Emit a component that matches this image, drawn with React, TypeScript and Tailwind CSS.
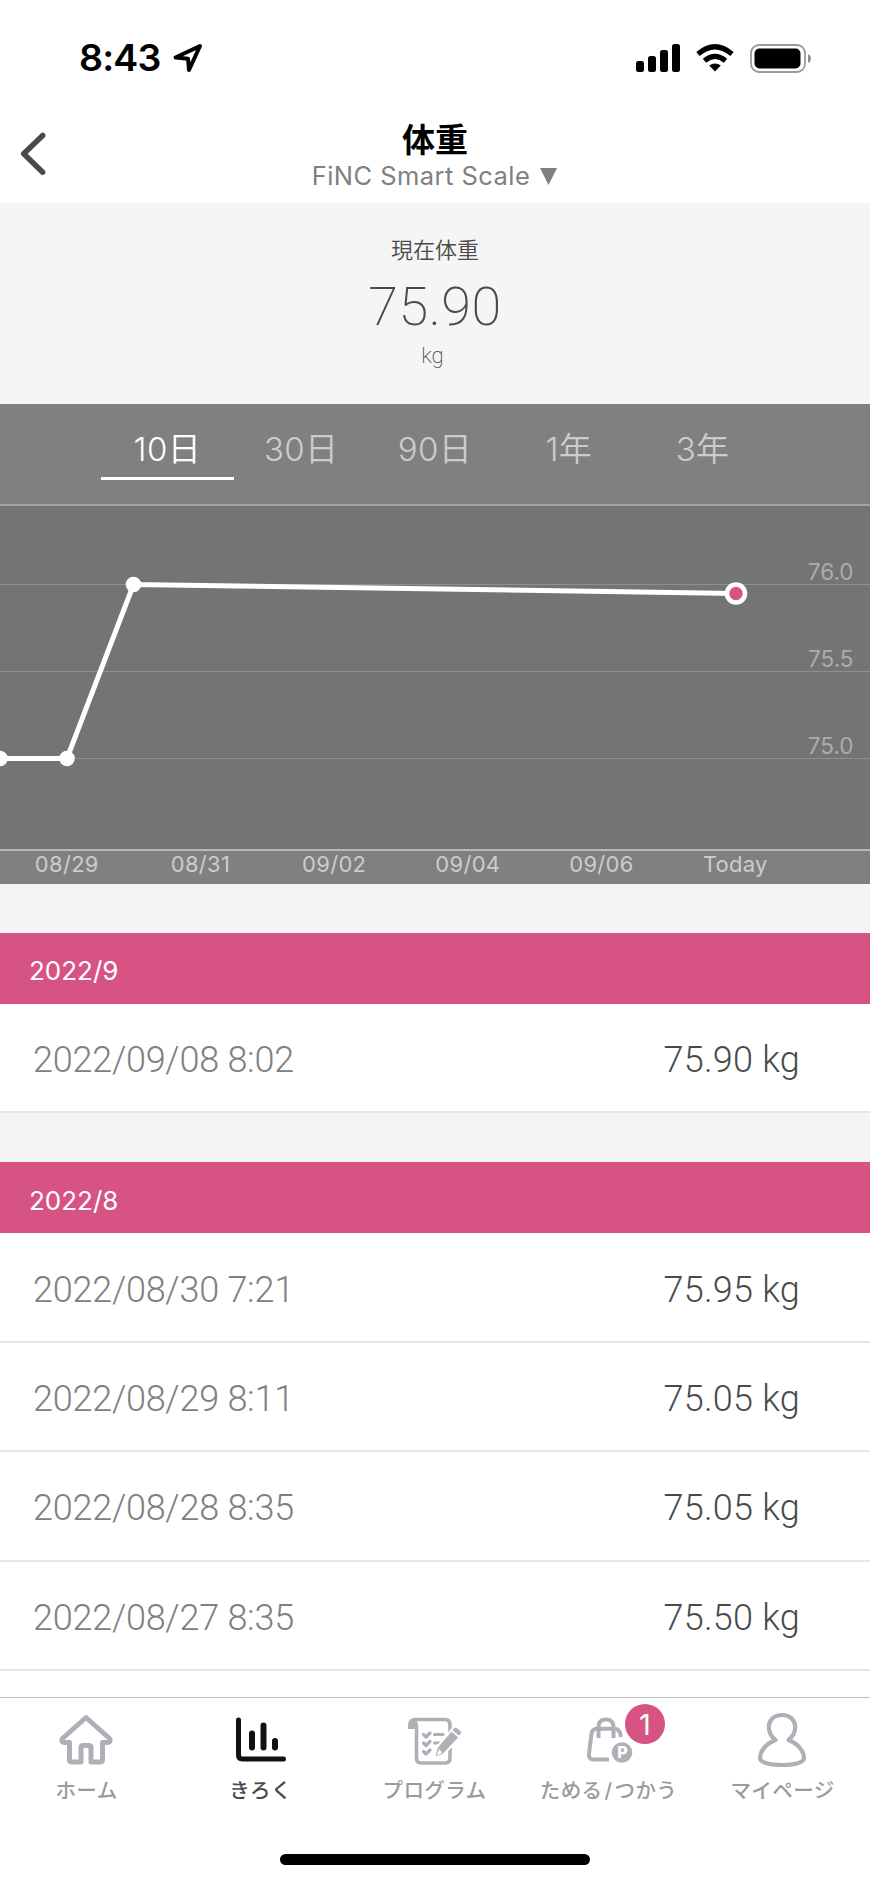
import type { ReactNode } from 'react'
import clsx from 'clsx'

const ranges = ['10日', '30日', '90日', '1年', '3年']
const dates = ['08/29', '08/31', '09/02', '09/04', '09/06', 'Today']

const gridLines = [
  { y: 78.5, label: '76.0' },
  { y: 165.5, label: '75.5' },
  { y: 252.5, label: '75.0' },
]

const points = [
  { x: 0, y: 252.5 },
  { x: 67, y: 252.5 },
  { x: 133.5, y: 78.5 },
  { x: 736, y: 87.5 },
]

const months = [
  { title: '2022/9', rows: [{ date: '2022/09/08 8:02', weight: '75.90 kg' }] },
  {
    title: '2022/8',
    rows: [
      { date: '2022/08/30 7:21', weight: '75.95 kg' },
      { date: '2022/08/29 8:11', weight: '75.05 kg' },
      { date: '2022/08/28 8:35', weight: '75.05 kg' },
      { date: '2022/08/27 8:35', weight: '75.50 kg' },
    ],
  },
]

function StatusBar() {
  return (
    <div className="flex h-[116px] items-center justify-between pl-[79px] pr-[58px]">
      <div className="flex items-center gap-[11px]">
        <span className="text-[37.5px] leading-none font-semibold tracking-[-0.8px] text-black">8:43</span>
        <svg width="32" height="32" viewBox="0 0 32 32" fill="none" stroke="#000" strokeWidth="4" strokeLinejoin="round">
          <path d="M28 4 3.500 15.500 16 16.800 17 28Z" />
        </svg>
      </div>
      <div className="flex items-center gap-4">
        <svg width="44" height="28" viewBox="0 0 44 28" fill="#000">
          <rect x="0" y="17" width="8" height="11" rx="2.500" />
          <rect x="12" y="12" width="8" height="16" rx="2.500" />
          <rect x="24" y="6" width="8" height="22" rx="2.500" />
          <rect x="36" y="0" width="8" height="28" rx="2.500" />
        </svg>
        <svg width="38" height="28" viewBox="0 0 38 28" fill="none" stroke="#000" strokeWidth="5.200">
          <path d="M2 10Q19-4.500 36 10" />
          <path d="M8.500 16.800Q19 8 29.500 16.800" />
          <path d="M19 27.500 13.200 21.600Q19 17.200 24.800 21.600Z" fill="#000" stroke="none" />
        </svg>
        <svg width="62" height="29" viewBox="0 0 62 29">
          <rect x="1" y="1" width="54" height="27" rx="8" fill="none" stroke="#9a9a9a" strokeWidth="1.800" />
          <rect x="4.500" y="4.500" width="46" height="20" rx="5" fill="#000" />
          <path d="M58 10q3 1.500 3 4.500t-3 4.500Z" fill="#8f8f8f" />
        </svg>
      </div>
    </div>
  )
}

function Header() {
  return (
    <header className="grid h-[87px] grid-cols-[120px_1fr_120px]">
      <button className="flex items-start pt-4 pl-5" aria-label="戻る">
        <svg width="28" height="44" viewBox="0 0 28 44" fill="none" stroke="#4a4a4a" strokeWidth="5.500" strokeLinecap="round" strokeLinejoin="round">
          <path d="M22.700 3.500 3.700 21.800 22.700 40.200" />
        </svg>
      </button>
      <div className="flex flex-col items-center">
        <h1 className="mt-[6px] text-[33px] leading-[36px] font-bold text-black">体重</h1>
        <div className="mt-[3px] mr-[1px] flex items-center gap-[10px] text-[#808080]">
          <span className="text-[25.500px] leading-[30px] tracking-[0.45px]">FiNC Smart Scale</span>
          <svg width="17" height="17" viewBox="0 0 17 17" fill="#808080">
            <path d="M0 0H17L8.500 17Z" />
          </svg>
        </div>
      </div>
    </header>
  )
}

function Summary() {
  return (
    <section className="flex h-[201px] flex-col items-center bg-[#f5f5f5] text-[#4a4a4a]">
      <p className="mt-[34px] text-[22px] leading-[26px] font-[350]">現在体重</p>
      <p className="mt-[17px] font-['Roboto'] text-[54px] leading-[54px] font-extralight tracking-[0.5px]">75.90</p>
      <p className="mt-[9px] mr-[5px] font-['Roboto'] text-[22px] leading-[26px] font-extralight">kg</p>
    </section>
  )
}

function Chart() {
  const last = points[points.length - 1]
  return (
    <section className="bg-[#808080]">
      <div className="flex h-[102px] justify-center border-b-2 border-[#a5a5a5]">
        {ranges.map((range, i) => (
          <button
            key={range}
            className={clsx(
              'h-[76px] w-[133.800px] border-b-[3px] pt-[17px] text-[33px] leading-none font-[350] tracking-[0.4px]',
              i === 0 ? 'border-white text-white' : 'border-transparent text-[#cccccc]',
            )}
          >
            {range}
          </button>
        ))}
      </div>
      <svg width="870" height="343" viewBox="0 0 870 343" className="block bg-[#747474]">
        {gridLines.map((line) => (
          <g key={line.label}>
            <path d={`M0 ${line.y}H870`} stroke="#8f8f8f" />
            <text x="853.500" y={line.y - 4.500} textAnchor="end" fill="#acacac" className="text-[22.500px]">
              {line.label}
            </text>
          </g>
        ))}
        <polyline points={points.map((p) => `${p.x},${p.y}`).join(' ')} fill="none" stroke="#fff" strokeWidth="5" />
        {points.slice(0, -1).map((p) => (
          <circle key={p.x} cx={p.x} cy={p.y} r="7.800" fill="#fff" />
        ))}
        <circle cx={last.x} cy={last.y} r="9" fill="#d65383" stroke="#fff" strokeWidth="4.600" />
      </svg>
      <div className="h-[35px] border-t-2 border-[#b8b8b8]">
        <div className="grid w-[802px] grid-cols-6 text-center text-[22px] leading-[26px] tracking-[0.3px] text-[#cccccc]">
          {dates.map((date) => (
            <span key={date}>{date}</span>
          ))}
        </div>
      </div>
    </section>
  )
}

function History() {
  return (
    <div className="bg-[#f4f4f5]">
      {months.map((month) => (
        <section key={month.title} className="pt-[48.500px]">
          <h2 className="flex h-[71.500px] items-center bg-[#d65383] pt-[5px] pl-[29px] text-[26px] text-white">
            {month.title}
          </h2>
          {month.rows.map((row) => (
            <div
              key={row.date}
              className="flex h-[109.400px] items-center justify-between border-b-2 border-[#e5e5e5] bg-white pt-[5px] pr-[70px] pl-[33px] font-['Roboto'] text-[36px] font-light"
            >
              <span className="tracking-[-0.25px] text-[#808080]">{row.date}</span>
              <span className="tracking-[0.25px] text-[#4a4a4a]">{row.weight}</span>
            </div>
          ))}
        </section>
      ))}
    </div>
  )
}

function HomeIcon() {
  return (
    <svg className="mr-[2px]" width="54" height="54" viewBox="0 0 54 54" fill="none" stroke="#b0afb7" strokeWidth="5" strokeLinejoin="round">
      <path d="M27 5.500 3.500 26.500Q1.500 30.500 6 30.500H10.500V47.500Q10.500 50 13 50H22V35.500Q22 33.500 24 33.500H30Q32 33.500 32 35.500V50H41Q43.500 50 43.500 47.500V30.500H48Q52.500 30.500 50.500 26.500Z" />
    </svg>
  )
}

function RecordIcon() {
  return (
    <svg width="54" height="54" viewBox="0 0 54 54" fill="none" stroke="#111" strokeLinecap="round">
      <path d="M4.500 8V43Q4.500 47 8.500 47H49.500" strokeWidth="5" strokeLinejoin="round" />
      <path d="M18 21.500V35.500M29.500 13.500V35.500M41 29V35.500" strokeWidth="6" />
    </svg>
  )
}

function ProgramIcon() {
  return (
    <svg width="54" height="54" viewBox="0 0 54 54" fill="none" stroke="#b0afb7" strokeLinecap="round" strokeLinejoin="round">
      <path d="M6 7.500H37Q42 7.500 42 13V46Q42 51 37 51H13Q8.500 51 8.500 46V13" strokeWidth="3.600" />
      <path d="M0 17V13Q0 6 7 6Q10 8 10 17Z" fill="#b0afb7" stroke="none" />
      <path d="M15.500 22.500 18 25 22 21M15.500 31 18 33.500 22 29.500M15.500 39.500 18 42 22 38" strokeWidth="3.200" />
      <path d="M26.500 22.500H35M26.500 31H32" strokeWidth="3.200" />
      <path d="M44 17.500 52.500 24.500 35 43 26 46 29 35Z" fill="#b0afb7" stroke="#fff" strokeWidth="2" />
      <path d="M31.500 37 34 41 28.500 43.500Z" fill="#fff" stroke="none" />
      <path d="M47 16Q49.500 16 53 20.500L51 23 45.500 18.500Z" fill="#b0afb7" stroke="#b0afb7" />
      <path d="M44.500 19.500 50.500 25" stroke="#fff" strokeWidth="1.300" />
    </svg>
  )
}

function PointsIcon() {
  return (
    <span className="relative">
      <svg width="54" height="54" viewBox="0 0 54 54" fill="none" stroke="#b0afb7" strokeWidth="4">
        <path d="M27 47.500H12Q6 47.500 7 41.500L9.500 22Q10.200 16.800 15 16.800H33Q38 17 39 25" />
        <path d="M16.500 26V15Q16.500 7.500 24 7.500T31.500 15V26" />
        <circle cx="40" cy="40.500" r="10.300" fill="#b0afb7" stroke="none" />
        <text x="40.500" y="46.300" textAnchor="middle" fill="#fff" stroke="none" className="text-[16px] font-extrabold">
          P
        </text>
      </svg>
      <span className="absolute top-[-8px] left-[43px] flex size-[40px] items-center justify-center rounded-full bg-[#d65383] text-[29px] leading-none text-white">
        1
      </span>
    </span>
  )
}

function ProfileIcon() {
  return (
    <svg className="-mt-[3px] mr-[3px]" width="54" height="58" viewBox="0 0 54 58" fill="none" stroke="#b0afb7" strokeWidth="4.200" strokeLinejoin="round">
      <path d="M20.500 31C10 35 5 43 5 49C5 53.500 15 56 27 56S49 53.500 49 49C49 43 44 35 33.500 31C38.500 27 40.500 22 40.200 17C39.500 10 34 6 27 6S14.500 10 13.800 17C13.500 22 15.500 27 20.500 31Z" />
    </svg>
  )
}

const tabs: { id: string; label: ReactNode; icon: ReactNode; active?: boolean }[] = [
  { id: 'home', label: 'ホーム', icon: <HomeIcon /> },
  { id: 'record', label: 'きろく', icon: <RecordIcon />, active: true },
  { id: 'program', label: 'プログラム', icon: <ProgramIcon /> },
  { id: 'points', label: <>ためる<span className="px-[2px]">/</span>つかう</>, icon: <PointsIcon /> },
  { id: 'profile', label: 'マイページ', icon: <ProfileIcon /> },
]

function TabBar() {
  return (
    <nav className="grid h-[157px] shrink-0 grid-cols-5 border-t border-[#bdbdbd] bg-white">
      {tabs.map((tab) => (
        <button key={tab.id} className="flex flex-col items-center pt-[14px]">
          <span className="flex h-[58px]">{tab.icon}</span>
          <span
            className={clsx(
              'mt-[6px] mr-[1px] text-[20.500px] leading-[30px] font-medium tracking-[0.4px] whitespace-nowrap',
              tab.active ? 'text-[#4a4a4a]' : 'text-[#9b9b9b]',
            )}
          >
            {tab.label}
          </span>
        </button>
      ))}
    </nav>
  )
}

export default function App() {
  return (
    <div className="flex h-[1883px] w-[870px] flex-col overflow-hidden bg-white font-['Inter','Noto_Sans_CJK_JP',sans-serif]">
      <StatusBar />
      <Header />
      <Summary />
      <Chart />
      <main className="h-[813px] shrink-0 overflow-hidden bg-white">
        <History />
      </main>
      <TabBar />
      <div className="mx-auto h-[11px] w-[310px] shrink-0 rounded-full bg-black" />
    </div>
  )
}
